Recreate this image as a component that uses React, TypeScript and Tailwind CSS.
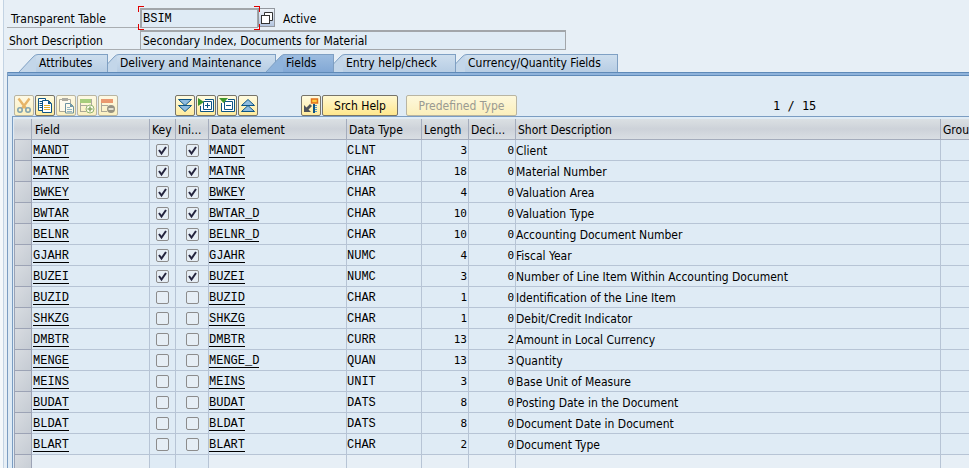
import React from "react";

type FieldRow = {
  name: string;
  key: boolean;
  element: string;
  type: string;
  length: number;
  decimals: number;
  text: string;
};

const row = (name: string, key: boolean, element: string, type: string, length: number, decimals: number, text: string): FieldRow => ({
  name, key, element, type, length, decimals, text,
});

const rows: FieldRow[] = [
  row("MANDT", true, "MANDT", "CLNT", 3, 0, "Client"),
  row("MATNR", true, "MATNR", "CHAR", 18, 0, "Material Number"),
  row("BWKEY", true, "BWKEY", "CHAR", 4, 0, "Valuation Area"),
  row("BWTAR", true, "BWTAR_D", "CHAR", 10, 0, "Valuation Type"),
  row("BELNR", true, "BELNR_D", "CHAR", 10, 0, "Accounting Document Number"),
  row("GJAHR", true, "GJAHR", "NUMC", 4, 0, "Fiscal Year"),
  row("BUZEI", true, "BUZEI", "NUMC", 3, 0, "Number of Line Item Within Accounting Document"),
  row("BUZID", false, "BUZID", "CHAR", 1, 0, "Identification of the Line Item"),
  row("SHKZG", false, "SHKZG", "CHAR", 1, 0, "Debit/Credit Indicator"),
  row("DMBTR", false, "DMBTR", "CURR", 13, 2, "Amount in Local Currency"),
  row("MENGE", false, "MENGE_D", "QUAN", 13, 3, "Quantity"),
  row("MEINS", false, "MEINS", "UNIT", 3, 0, "Base Unit of Measure"),
  row("BUDAT", false, "BUDAT", "DATS", 8, 0, "Posting Date in the Document"),
  row("BLDAT", false, "BLDAT", "DATS", 8, 0, "Document Date in Document"),
  row("BLART", false, "BLART", "CHAR", 2, 0, "Document Type"),
];

const mono = "font-['Liberation_Mono',monospace]";
const digits = "font-['DejaVu_Sans_Mono',monospace]";

function Tab({ label, className, active = false }: { label: string; className: string; active?: boolean }) {
  return (
    <button
      type="button"
      role="tab"
      aria-selected={active}
      className={`relative flex h-[18px] shrink-0 items-center whitespace-nowrap ${className}`}
    >
      <svg className="absolute inset-0 h-full w-full" aria-hidden="true">
        <defs>
          <linearGradient id="tab-idle" x1="0" x2="0" y1="0" y2="1">
            <stop offset="0" stopColor="#cfdfee" />
            <stop offset="1" stopColor="#b7cde4" />
          </linearGradient>
          <linearGradient id="tab-active" x1="0" x2="0" y1="0" y2="1">
            <stop offset="0" stopColor="#9dbde0" />
            <stop offset="1" stopColor="#82a8d5" />
          </linearGradient>
        </defs>
        <path d="M0 18 L14 3 Q16 0.5 19 0.5 H600 V18 Z" fill={active ? "#8fb3db" : "#c3d6e9"} />
        <rect x="17" y="0" width="100%" height="18" fill={active ? "url(#tab-active)" : "url(#tab-idle)"} />
        <path d="M0 18 L14 3 Q16 0.5 19 0.5 H600" fill="none" stroke="#7fa0c4" />
      </svg>
      <span className="absolute inset-y-0 right-0 w-px bg-[#7f9fc2]" />
      <span className="relative pl-5">{label}</span>
    </button>
  );
}

function ToolButton({ label, disabled = false, children }: { label: string; disabled?: boolean; children: React.ReactNode }) {
  return (
    <button
      type="button"
      aria-label={label}
      disabled={disabled}
      className="flex h-[21px] w-5 items-center justify-center rounded-[2px] border border-[#77746a] bg-gradient-to-b from-[#fffbe0] to-[#ffeb9c] disabled:border-[#b9b5a2] disabled:from-[#fdf9e4] disabled:to-[#fbf0c0]"
    >
      <svg viewBox="0 0 16 17" className={`h-[17px] w-4 ${disabled ? "opacity-60" : ""}`} aria-hidden="true">
        {children}
      </svg>
    </button>
  );
}

function TextButton({ label, width, disabled = false }: { label: string; width: string; disabled?: boolean }) {
  return (
    <button
      type="button"
      disabled={disabled}
      className={`h-[21px] rounded-[2px] border border-[#77746a] bg-gradient-to-b from-[#fff8d0] to-[#ffe78c] pt-px whitespace-nowrap disabled:border-[#b9b5a2] disabled:from-[#fdf8dc] disabled:to-[#fbefbc] disabled:text-[#9a9a92] ${width}`}
    >
      {label}
    </button>
  );
}

function Check({ label, checked }: { label: string; checked: boolean }) {
  return (
    <span className="relative mx-auto block size-[13px]">
      <input
        type="checkbox"
        aria-label={label}
        defaultChecked={checked}
        className="peer block size-[13px] appearance-none rounded-[2px] border border-[#8c8c8c] bg-[#e6eef5]"
      />
      <svg viewBox="0 0 13 13" className="pointer-events-none absolute inset-0 hidden size-[13px] peer-checked:block" aria-hidden="true">
        <path d="M3 6 L5.5 9.5 L10 3" fill="none" stroke="#24243e" strokeWidth="2" />
      </svg>
    </span>
  );
}

function Head({ label, pad = "pl-0.5" }: { label: string; pad?: string }) {
  return (
    <th scope="col" className={`h-[21px] overflow-hidden border-r border-b border-[#a4acbc] bg-gradient-to-b from-[#dbe0e3] via-[#cdd2d9] to-[#d9dee3] pt-0.5 text-left font-normal whitespace-nowrap last:border-r-0 ${pad}`}>
      {label}
    </th>
  );
}

const box = "h-[21px] overflow-hidden whitespace-nowrap border-r border-b border-[#b7c4d5] last:border-r-0";
const cell = `${box} pt-0.5`;

function Link({ text }: { text: string }) {
  return (
    <a href="#" className="block h-4 w-fit border-b border-black leading-[18px]">
      {text}
    </a>
  );
}

function Selector({ label }: { label: string }) {
  return (
    <td className="h-[21px] border-x border-b border-[#9ca3b5] bg-gradient-to-br from-[#d8dce1] to-[#c5cbd3]">
      <button type="button" aria-label={label} className="block h-full w-full" />
    </td>
  );
}

export default function App() {
  return (
    <div className="h-screen overflow-hidden bg-[#f4f8fb] pl-[3px] font-['DejaVu_Sans_Condensed','DejaVu_Sans',sans-serif] text-xs leading-4 text-black [font-stretch:condensed]">
      <div className="flex h-full flex-col border-l border-[#c3d3e3] bg-[#e7eff6] pl-[3px]">
        <header className="pt-2">
          <div className="flex h-5 items-end">
            <label htmlFor="table-name" className="flex h-5 w-[131px] items-center border-b border-[#a9adb1] pt-0.5 pl-1">
              Transparent Table
            </label>
            <div className="relative z-10 ml-0.5 h-5 w-[118px]">
              <input
                id="table-name"
                defaultValue="BSIM"
                className={`block h-full w-full border border-t-2 border-l-2 border-[#a2a6aa] bg-[#dfebf5] pl-px outline-none ${mono}`}
              />
              <span className="absolute -top-0.5 -left-0.5 size-1.5 border-t border-l border-[#e00000]" />
              <span className="absolute -top-0.5 -right-0.5 size-1.5 border-t border-r border-[#e00000]" />
              <span className="absolute -bottom-0.5 -left-0.5 size-1.5 border-b border-l border-[#e00000]" />
              <span className="absolute -right-0.5 -bottom-0.5 size-1.5 border-r border-b border-[#e00000]" />
            </div>
            <button type="button" aria-label="Value help" className="mb-px flex h-[19px] w-[17px] items-center justify-center border border-[#93989f] bg-gradient-to-b from-[#edf2f8] to-[#b4c5df]">
              <svg viewBox="0 0 12 12" className="size-3" aria-hidden="true">
                <path d="M3.5 3 V0.5 H11.5 V8.5 H9" fill="#fff" stroke="#333" />
                <rect x="0.5" y="3.5" width="8" height="8" fill="#fff" stroke="#333" />
              </svg>
            </button>
            <output className="pb-px pl-2">Active</output>
          </div>
          <div className="mt-0.5 flex h-5">
            <label htmlFor="description" className="flex w-[133px] items-center border-b border-[#a9adb1] pt-0.5 pl-0.5">
              Short Description
            </label>
            <input
              id="description"
              readOnly
              value="Secondary Index, Documents for Material"
              className="block w-[426px] border border-t-2 border-[#a2a6aa] bg-[#dfebf5] pl-0.5 outline-none"
            />
          </div>
        </header>

        <div role="tablist" className="isolate mt-1 flex pl-3">
          <Tab label="Attributes" className="z-30 w-[89px]" />
          <Tab label="Delivery and Maintenance" className="z-20 -ml-2 w-[176px]" />
          <Tab label="Fields" className="z-40 -ml-2.5 w-[68px]" active />
          <Tab label="Entry help/check" className="z-20 -ml-2 w-[130px]" />
          <Tab label="Currency/Quantity Fields" className="z-10 -ml-2 w-[170px]" />
        </div>

        <main className="flex min-h-0 flex-1 flex-col border-l border-[#7b9dc2] bg-[#dfebf5]">
          <div className="h-1 shrink-0 border-y border-[#5f8ab8] bg-[#8fb3db]" />
          <div className="mt-[19px] flex items-center pl-1.5">
            <div className="flex gap-px">
              <ToolButton label="Cut" disabled>
                <path d="M2.5 1.5 L10 11.5 M13.5 1.5 L6 11.5" stroke="#d98a20" strokeWidth="2.4" fill="none" />
                <circle cx="4" cy="13" r="2.2" fill="none" stroke="#33719f" strokeWidth="1.6" />
                <circle cx="12" cy="13" r="2.2" fill="none" stroke="#33719f" strokeWidth="1.6" />
              </ToolButton>
              <ToolButton label="Copy">
                <path d="M1.5 1.5 H8.5 V13.5 H1.5 Z" fill="#fff" stroke="#0d5484" />
                <path d="M2.5 4.5 H5 M2.5 6.5 H5 M2.5 8.5 H5 M2.5 10.5 H5" stroke="#0d5484" />
                <path d="M5.5 3.5 H11.5 L14.5 6.5 V15.5 H5.5 Z" fill="#fff" stroke="#0d5484" />
                <path d="M11 3.5 V7 H14.5 Z" fill="#0d5484" />
                <path d="M7 8.5 H13 M7 10.5 H13 M7 12.5 H13" stroke="#e2ad27" />
              </ToolButton>
              <ToolButton label="Paste" disabled>
                <path d="M1.5 2.5 H12.5 V14.5 H1.5 Z" fill="#fff" stroke="#777" />
                <path d="M4 1 H10 V4 H4 Z" fill="#777" />
                <path d="M7.5 6.5 H12.5 L15.5 9.5 V16 H7.5 Z" fill="#fff" stroke="#0d5484" />
                <path d="M12 6.5 V10 H15.5 Z" fill="#0d5484" />
                <path d="M9 10.5 H12 M9 12.5 H14 M9 14.5 H14" stroke="#4f8fc0" />
              </ToolButton>
              <ToolButton label="Insert row" disabled>
                <path d="M1 2 H13 V6 H1 Z" fill="#6eb23f" />
                <path d="M1 8.5 H8 M1 14.5 H7 M1.5 6 V14 M12.5 2 V8" stroke="#777" fill="none" />
                <circle cx="11" cy="12" r="4" fill="#fff" stroke="#4d8b38" />
                <path d="M11 9.5 V14.5 M8.5 12 H13.5" stroke="#3c7a29" strokeWidth="1.5" />
              </ToolButton>
              <ToolButton label="Delete row" disabled>
                <path d="M1 2 H13 V6 H1 Z" fill="#df5c2a" />
                <path d="M1 8.5 H8 M1 14.5 H7 M1.5 6 V14" stroke="#777" fill="none" />
                <circle cx="11" cy="12" r="4" fill="#555" />
                <path d="M8.5 12 H13.5" stroke="#fff" strokeWidth="1.5" />
              </ToolButton>
            </div>
            <div className="ml-[57px] flex gap-px">
              <ToolButton label="Last entry">
                <path d="M1.5 2.5 H14.5 L8 8.5 Z" fill="#8fbce0" stroke="#0d5484" />
                <path d="M1.5 8.5 H14.5 L8 14.5 Z" fill="#8fbce0" stroke="#0d5484" />
              </ToolButton>
              <ToolButton label="Expand">
                <path d="M7 2.5 H15.5 V14.5 H2.5 V9" fill="#fff" stroke="#0d5484" />
                <path d="M5.5 4.5 H13.5 V12.5 H5.5 Z" fill="#fff" stroke="#0d5484" />
                <path d="M9.5 6 V11 M7 8.5 H12" stroke="#0d5484" />
                <path d="M0 1 L6 5 L0 9 Z" fill="#3f962c" />
              </ToolButton>
              <ToolButton label="Collapse">
                <path d="M9 2.5 H15.5 V14.5 H2.5 V6" fill="#fff" stroke="#0d5484" />
                <path d="M5.5 4.5 H13.5 V12.5 H5.5 Z" fill="#fff" stroke="#0d5484" />
                <path d="M7 8.5 H12" stroke="#0d5484" />
                <path d="M0 1 H9 L4.5 6 Z" fill="#3f962c" />
              </ToolButton>
              <ToolButton label="First entry">
                <path d="M1.5 8.5 H14.5 L8 2.5 Z" fill="#8fbce0" stroke="#0d5484" />
                <path d="M1.5 14.5 H14.5 L8 8.5 Z" fill="#8fbce0" stroke="#0d5484" />
              </ToolButton>
            </div>
            <div className="ml-[43px] flex gap-px">
              <ToolButton label="Foreign keys">
                <path d="M8.5 2 H14.5 V6 H8.5 Z" fill="#ffca3c" stroke="#e0701c" strokeWidth="1.5" />
                <path d="M11 7 V16" stroke="#0d5484" strokeWidth="2" />
                <path d="M13 8 V16" stroke="#5794bd" strokeDasharray="1 1" strokeWidth="2" />
                <path d="M1 8 V15 H8 L5.5 12.5 L9 9 L7 7 L3.5 10.5 Z" fill="#4f5359" />
              </ToolButton>
              <TextButton label="Srch Help" width="w-[76px]" />
            </div>
            <div className="ml-2">
              <TextButton label="Predefined Type" width="w-[111px]" disabled />
            </div>
            <output className={`ml-64 whitespace-pre ${digits}`}>1 / 15</output>
          </div>

          <div className="ml-1 min-h-0 flex-1 overflow-hidden border-t border-l border-[#7b9dc2] pt-0.5 pl-px">
            <table className="w-full table-fixed border-separate border-spacing-0">
              <colgroup>
                <col className="w-[18px]" />
                <col className="w-[118px]" />
                <col className="w-[26px]" />
                <col className="w-[33px]" />
                <col className="w-[138px]" />
                <col className="w-[75px]" />
                <col className="w-[47px]" />
                <col className="w-[47px]" />
                <col className="w-[425px]" />
                <col />
              </colgroup>
              <thead>
                <tr>
                  <Head label="" />
                  <Head label="Field" pad="pl-[3px]" />
                  <Head label="Key" />
                  <Head label="Ini..." />
                  <Head label="Data element" />
                  <Head label="Data Type" />
                  <Head label="Length" />
                  <Head label="Deci..." />
                  <Head label="Short Description" />
                  <Head label="Grou" />
                </tr>
              </thead>
              <tbody>
                {rows.map((r) => (
                  <tr key={r.name}>
                    <Selector label={`Select ${r.name}`} />
                    <td className={`${box} ${mono} pl-px`}><Link text={r.name} /></td>
                    <td className={box}><Check label={`${r.name} key`} checked={r.key} /></td>
                    <td className={box}><Check label={`${r.name} initial values`} checked={r.key} /></td>
                    <td className={`${box} ${mono}`}><Link text={r.element} /></td>
                    <td className={`${cell} ${mono}`}>{r.type}</td>
                    <td className={`${cell} ${digits} pr-px text-right text-[11px]`}>{r.length}</td>
                    <td className={`${cell} ${digits} pr-px text-right text-[11px]`}>{r.decimals}</td>
                    <td className={cell}>{r.text}</td>
                    <td className={cell} />
                  </tr>
                ))}
                <tr>
                  <Selector label="Select empty row" />
                  <td className={`${cell} bg-[#e7eff6]`} />
                  <td className={cell} />
                  <td className={cell} />
                  <td className={`${cell} bg-[#e7eff6]`} />
                  <td className={`${cell} bg-[#e7eff6]`} />
                  <td className={`${cell} bg-[#e7eff6]`} />
                  <td className={`${cell} bg-[#e7eff6]`} />
                  <td className={`${cell} bg-[#e7eff6]`} />
                  <td className={`${cell} bg-[#e7eff6]`} />
                </tr>
              </tbody>
            </table>
          </div>
        </main>
      </div>
    </div>
  );
}
